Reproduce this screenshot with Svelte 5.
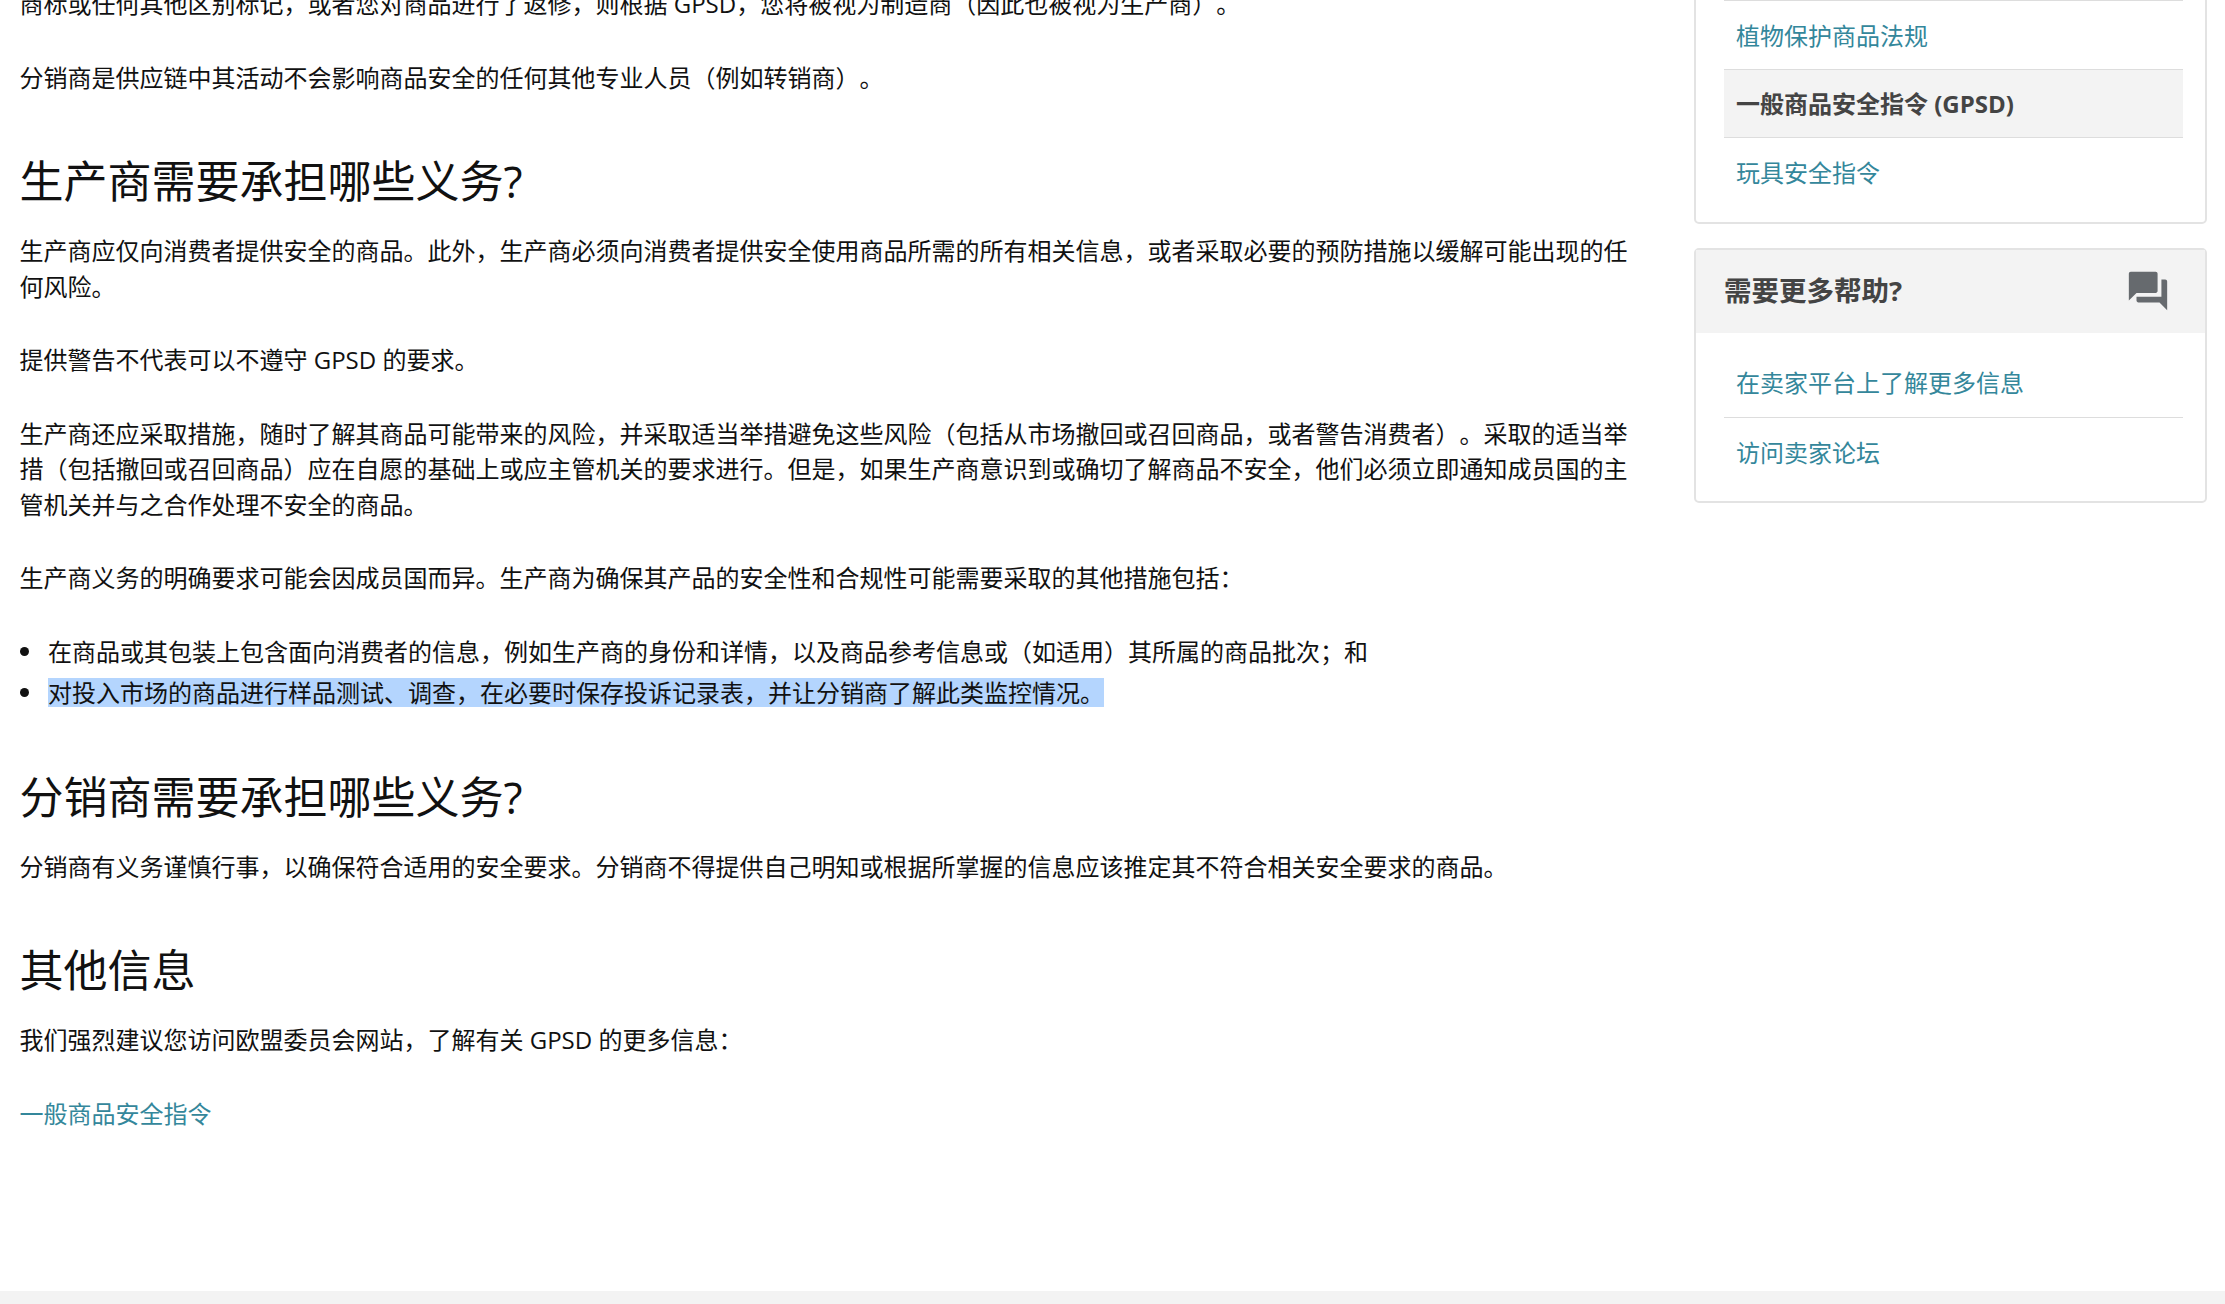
<script>
    //Sidebar link lists; "current" marks the page being read
    const topLinks = [
        { label: "植物保护商品法规" },
        { label: "一般商品安全指令 (GPSD)", current: true },
        { label: "玩具安全指令" }
    ];
    const helpLinks = ["在卖家平台上了解更多信息", "访问卖家论坛"];
</script>

<div class="page" lang="zh-CN">
    <div class="columns">
        <main>
            <p>商标或任何其他区别标记&#xFF0C;或者您对商品进行了返修&#xFF0C;则根据 GPSD&#xFF0C;您将被视为制造商&#xFF08;因此也被视为生产商&#xFF09;。</p>
            <p>分销商是供应链中其活动不会影响商品安全的任何其他专业人员&#xFF08;例如转销商&#xFF09;。</p>

            <h2>生产商需要承担哪些义务?</h2>
            <p>生产商应仅向消费者提供安全的商品。此外&#xFF0C;生产商必须向消费者提供安全使用商品所需的所有相关信息&#xFF0C;或者采取必要的预防措施以缓解可能出现的任何风险。</p>
            <p>提供警告不代表可以不遵守 GPSD 的要求。</p>
            <p>生产商还应采取措施&#xFF0C;随时了解其商品可能带来的风险&#xFF0C;并采取适当举措避免这些风险&#xFF08;包括从市场撤回或召回商品&#xFF0C;或者警告消费者&#xFF09;。采取的适当举措&#xFF08;包括撤回或召回商品&#xFF09;应在自愿的基础上或应主管机关的要求进行。但是&#xFF0C;如果生产商意识到或确切了解商品不安全&#xFF0C;他们必须立即通知成员国的主管机关并与之合作处理不安全的商品。</p>
            <p>生产商义务的明确要求可能会因成员国而异。生产商为确保其产品的安全性和合规性可能需要采取的其他措施包括&#xFF1A;</p>
            <ul>
                <li>在商品或其包装上包含面向消费者的信息&#xFF0C;例如生产商的身份和详情&#xFF0C;以及商品参考信息或&#xFF08;如适用&#xFF09;其所属的商品批次&#xFF1B;和</li>
                <li><span class="selected">对投入市场的商品进行样品测试、调查&#xFF0C;在必要时保存投诉记录表&#xFF0C;并让分销商了解此类监控情况。</span></li>
            </ul>

            <h2>分销商需要承担哪些义务?</h2>
            <p>分销商有义务谨慎行事&#xFF0C;以确保符合适用的安全要求。分销商不得提供自己明知或根据所掌握的信息应该推定其不符合相关安全要求的商品。</p>

            <h2>其他信息</h2>
            <p>我们强烈建议您访问欧盟委员会网站&#xFF0C;了解有关 GPSD 的更多信息&#xFF1A;</p>
            <p><a href="#gpsd">一般商品安全指令</a></p>
        </main>

        <aside>
            <section class="card first">
                <ul class="links">
                    {#each topLinks as link}
                        <li class:current={link.current}>
                            {#if link.current}
                                {link.label}
                            {:else}
                                <a href="#link">{link.label}</a>
                            {/if}
                        </li>
                    {/each}
                </ul>
            </section>

            <section class="card">
                <header>
                    <span>需要更多帮助?</span>
                    <svg viewBox="0 0 24 24" width="46" height="46" aria-hidden="true">
                        <path d="M21 6h-2v9H6v2c0 .55.45 1 1 1h11l4 4V7c0-.55-.45-1-1-1zm-4 6V3c0-.55-.45-1-1-1H3c-.55 0-1 .45-1 1v14l4-4h10c.55 0 1-.45 1-1z" />
                    </svg>
                </header>
                <ul class="links">
                    {#each helpLinks as label}
                        <li><a href="#help">{label}</a></li>
                    {/each}
                </ul>
            </section>
        </aside>
    </div>
    <footer></footer>
</div>

<style>
    :global(body){
        margin: 0;
        background: #fff;
    }

    .page{
        height: 1304px;
        overflow: hidden;
        display: flex;
        flex-direction: column;
        font-family: "Open Sans", "Noto Sans CJK SC", sans-serif;
        font-size: 24px;
        line-height: 35.5px;
        color: #111;
        text-spacing-trim: space-all;
    }

    /*Page is scrolled, so the first line starts above the window*/
    .columns{
        flex: 1;
        display: flex;
        align-items: flex-start;
        padding: 0 18px 0 19.5px;
    }

    main{
        width: 1612px;
        margin-top: -14px;
    }

    p{
        margin: 0 0 38px;
    }

    h2{
        margin: 58px 0 24px;
        font-size: 44px;
        line-height: 56px;
        font-weight: 400;
    }

    main ul{
        margin: 0 0 38px;
        padding-left: 28.5px;
        list-style: none;
    }

    main li{
        position: relative;
        margin-bottom: 6px;
    }

    /*Bullet is larger than the default disc*/
    main li::before{
        content: "";
        position: absolute;
        left: -28px;
        top: 13px;
        width: 9px;
        height: 9px;
        border-radius: 50%;
        background: #111;
    }

    .selected{
        display: inline-block;
        line-height: 29px;
        background: #b4d5fe;
    }

    a{
        color: #34879b;
        text-decoration: none;
    }

    aside{
        width: 513px;
        margin-left: 62.5px;
        display: flex;
        flex-direction: column;
        gap: 24px;
    }

    .card{
        border: 2px solid #e3e3e3;
        border-radius: 5px;
        background: #fff;
    }

    .card.first{
        margin-top: -32px;
        padding-top: 30px;
    }

    .card header{
        height: 83px;
        box-sizing: border-box;
        padding: 0 34px 2px 28px;
        display: flex;
        align-items: center;
        justify-content: space-between;
        background: #f3f3f3;
        font-size: 27.5px;
        font-weight: 700;
        color: #444;
    }

    .card svg{
        fill: #666a6e;
    }

    .links{
        list-style: none;
        margin: 0 22px 15px 28px;
        padding: 0;
    }

    .card header + .links{
        margin-top: 15px;
    }

    .links li{
        height: 69px;
        box-sizing: border-box;
        padding: 1px 12px 0;
        display: flex;
        align-items: center;
        border-top: 1px solid #ddd;
    }

    .card header + .links li:first-child{
        border-top: none;
    }

    .links li.current{
        background: #f3f3f3;
        font-weight: 700;
        color: #444;
        border-bottom: 1px solid #ddd;
    }

    .links li.current + li{
        border-top: none;
    }

    footer{
        height: 13px;
        background: #f3f3f3;
    }
</style>
